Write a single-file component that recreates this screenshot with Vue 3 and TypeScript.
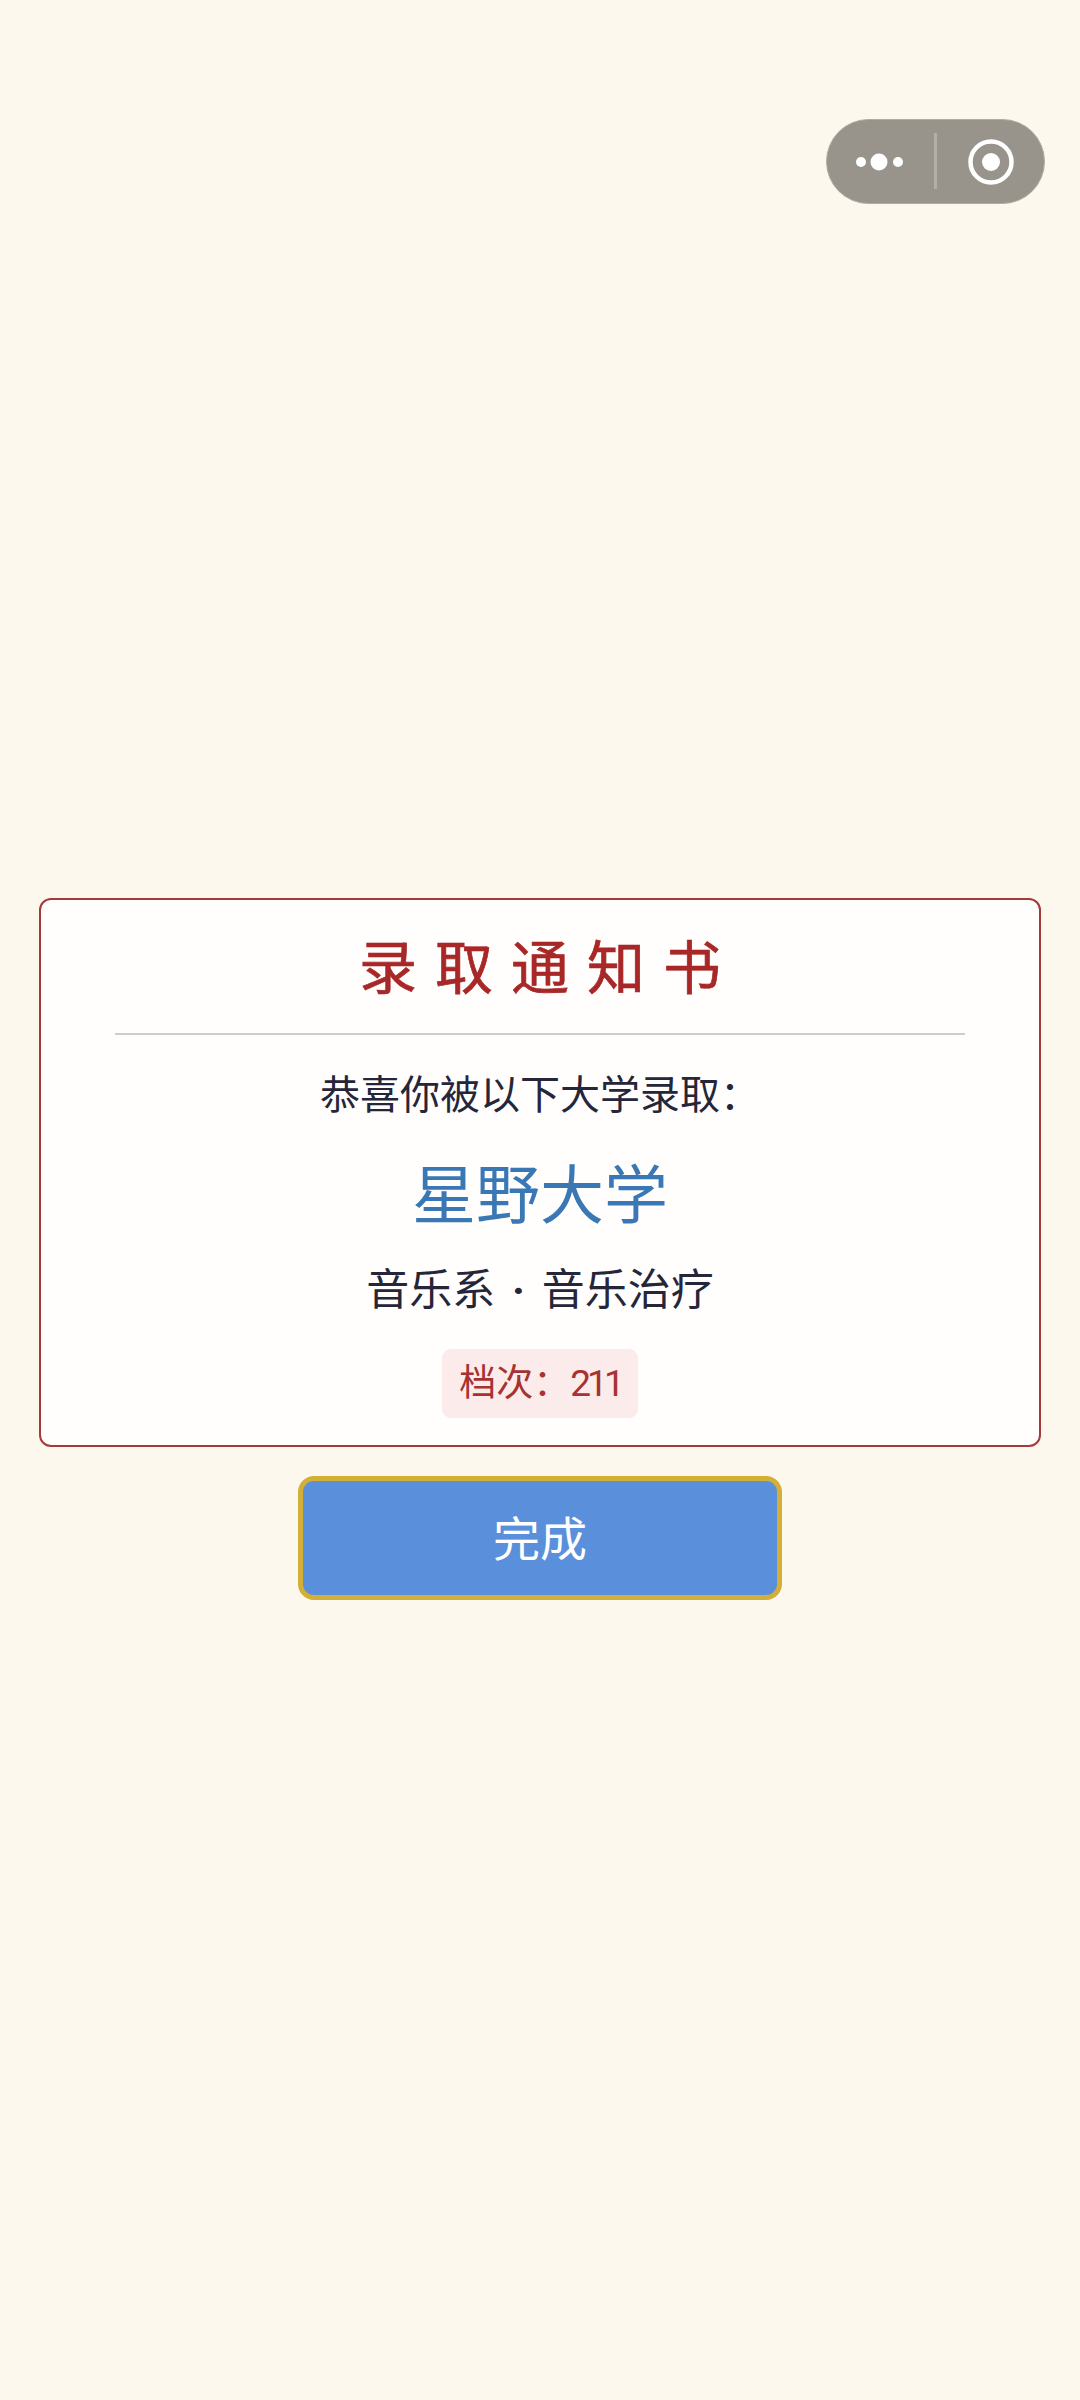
<script setup lang="ts">
const dots: { cx: number; r: number }[] = [
  { cx: 9, r: 5 },
  { cx: 27, r: 8.5 },
  { cx: 46, r: 5 },
]
</script>

<template>
  <main class="page">
    <div class="capsule">
      <svg class="dots" width="56" height="20" viewBox="0 0 56 20">
        <circle v-for="d in dots" :key="d.cx" :cx="d.cx" cy="10" :r="d.r" fill="#fff" />
      </svg>
      <span class="capsule-line"></span>
      <svg class="target" width="48" height="48" viewBox="0 0 48 48">
        <circle cx="24" cy="24" r="20.5" fill="none" stroke="#fff" stroke-width="4.5" />
        <circle cx="24" cy="24" r="9" fill="#fff" />
      </svg>
    </div>

    <section class="card">
      <h1 class="title">录取通知书</h1>
      <p class="lead">恭喜你被以下大学录取：</p>
      <p class="school">星野大学</p>
      <p class="major">音乐系 <span class="sep">·</span> 音乐治疗</p>
      <span class="tag">档次：<span class="tier">211</span></span>
    </section>

    <button class="done" type="button">完成</button>
  </main>
</template>

<style>
html,
body {
  margin: 0;
  background: #fcf8ee;
}
</style>

<style scoped>
.page {
  position: relative;
  box-sizing: border-box;
  width: 1080px;
  height: 2400px;
  padding: 898px 39px 0;
  display: flex;
  flex-direction: column;
  align-items: center;
  background: #fcf8ee;
  font-family: "Roboto", "Noto Sans CJK SC", sans-serif;
}

.capsule {
  position: absolute;
  top: 119px;
  left: 826px;
  box-sizing: border-box;
  width: 219px;
  height: 85px;
  border-radius: 43px;
  background: #99948b;
  border: 1px solid #b0aca0;
}

.dots {
  position: absolute;
  left: 25px;
  top: 32px;
}

.capsule-line {
  position: absolute;
  left: 107px;
  top: 13px;
  width: 3px;
  height: 56px;
  background: rgba(255, 255, 255, 0.25);
}

.target {
  position: absolute;
  left: 140px;
  top: 18px;
}

.card {
  box-sizing: border-box;
  width: 1002px;
  padding: 29px 74px 27px;
  display: flex;
  flex-direction: column;
  align-items: center;
  border: 2px solid #a33b3b;
  border-radius: 12px;
  background: #fffefd;
}

.title {
  box-sizing: border-box;
  align-self: stretch;
  margin: 0;
  padding-bottom: 24px;
  border-bottom: 2px solid #cfcdca;
  font-size: 58px;
  font-weight: 400;
  -webkit-text-stroke: 0.7px #a82727;
  line-height: 80px;
  letter-spacing: 18px;
  text-indent: 18px;
  text-align: center;
  color: #a82727;
}

.lead,
.school,
.major {
  margin: 0;
  text-align: center;
}

.lead {
  margin-top: 33px;
  font-size: 40px;
  line-height: 56px;
  color: #25263a;
}

.school {
  margin-top: 29px;
  font-size: 64px;
  line-height: 88px;
  color: #3a78b5;
}

.major {
  margin-top: 19px;
  font-size: 43px;
  line-height: 60px;
  word-spacing: 6px;
  color: #25263a;
}

.sep {
  font-weight: 700;
}

.tag {
  box-sizing: border-box;
  margin-top: 29px;
  height: 69px;
  padding: 0 17px;
  border-radius: 9px;
  font-size: 37px;
  line-height: 69px;
  color: #a83232;
  background: #fbeceb;
}

.tier {
  letter-spacing: -4px;
}

.done {
  box-sizing: border-box;
  margin-top: 29px;
  width: 484px;
  height: 124px;
  padding: 0 0 6px;
  border: 5px solid #d4af37;
  border-radius: 16px;
  font-family: inherit;
  font-size: 47px;
  color: #fff;
  background: #5a8fdb;
}
</style>
